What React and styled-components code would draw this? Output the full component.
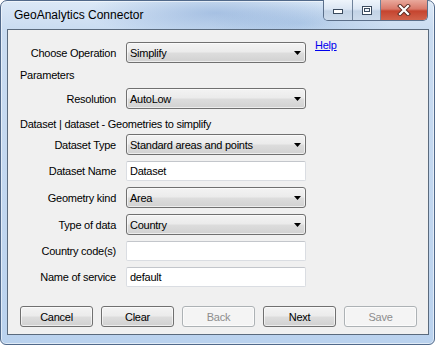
import React from "react";
import styled, { createGlobalStyle } from "styled-components";

const GlobalStyle = createGlobalStyle`
  html, body {
    margin: 0;
    padding: 0;
    background: #ffffff;
  }
  body {
    font-family: "Liberation Sans", Arial, sans-serif;
  }
`;

const Window = styled.div`
  box-sizing: border-box;
  width: 435px;
  height: 345px;
  display: flex;
  flex-direction: column;
  padding: 0 5px 9px 6px;
  border: 1px solid #51698a;
  border-radius: 7px 7px 6px 6px;
  background:
    radial-gradient(ellipse 130px 26px at 215px 12px, rgba(110, 150, 205, 0.45), transparent),
    radial-gradient(ellipse 90px 20px at 300px 22px, rgba(130, 170, 215, 0.35), transparent),
    linear-gradient(to bottom, #dce9f7 0px, #cadcf1 28px, #bad2ee 100%);
  box-shadow: inset 0 0 0 1px rgba(255, 255, 255, 0.55);
`;

const TitleBar = styled.div`
  height: 28px;
  display: flex;
  align-items: flex-start;
  padding-left: 7px;
`;

const Title = styled.span`
  align-self: center;
  margin-top: -1px;
  font-size: 12px;
  color: #000;
`;

const Captions = styled.div`
  margin-left: auto;
  margin-right: 1px;
  margin-top: -1px;
  display: flex;
  height: 20px;
  border: 1px solid #5b6f8a;
  border-top: none;
  border-radius: 0 0 5px 5px;
  overflow: hidden;
`;

const CaptionButton = styled.div`
  width: ${(p) => p.w}px;
  display: flex;
  align-items: center;
  justify-content: center;
  border-left: ${(p) => (p.first ? "none" : "1px solid #6f829a")};
  background: ${(p) =>
    p.close
      ? "linear-gradient(to bottom, #e9a99c 0%, #d9796a 45%, #c5442f 55%, #d1634b 100%)"
      : "linear-gradient(to bottom, #eef4fb 0%, #dbe6f3 45%, #c3d3e6 55%, #cddbeb 100%)"};
`;

const Client = styled.div`
  flex: 1;
  display: flex;
  flex-direction: column;
  background: #f0f0f0;
  border: 1px solid #5a6a7d;
  padding: 12px 0 7px 12px;
`;

const Row = styled.div`
  display: flex;
  align-items: center;
  gap: 10px;
  margin-top: ${(p) => p.top || 0}px;
`;

const Label = styled.span`
  width: 96px;
  text-align: right;
  font-size: 11px;
  letter-spacing: -0.25px;
  color: #000;
  white-space: nowrap;
`;

const Section = styled.div`
  height: 14px;
  line-height: 14px;
  font-size: 11px;
  letter-spacing: -0.25px;
  color: #000;
  margin-top: ${(p) => p.top}px;
`;

const Combo = styled.div`
  box-sizing: border-box;
  width: 180px;
  height: 21px;
  display: flex;
  align-items: center;
  justify-content: space-between;
  padding: 0 4px 0 3px;
  border: 1px solid #707070;
  border-radius: 3px;
  background: linear-gradient(to bottom, #f3f3f3 0%, #ebebeb 48%, #dddddd 52%, #d1d1d1 100%);
  box-shadow: inset 0 0 0 1px rgba(255, 255, 255, 0.6);
  font-size: 11px;
  letter-spacing: -0.25px;
  color: #000;
`;

const TextBox = styled.div`
  box-sizing: border-box;
  width: 180px;
  height: 20px;
  display: flex;
  align-items: center;
  padding: 0 3px;
  background: #ffffff;
  border: 1px solid #dadde2;
  border-top-color: #c3c6cb;
  border-radius: 2px;
  font-size: 11px;
  letter-spacing: -0.25px;
  color: #000;
`;

const HelpLink = styled.a`
  align-self: flex-start;
  margin-top: -3px;
  margin-left: -1px;
  font-size: 11px;
  letter-spacing: -0.25px;
  color: #0000ee;
  text-decoration: underline;
`;

const ButtonBar = styled.div`
  margin-top: auto;
  display: flex;
  gap: 8px;
`;

const Button = styled.div`
  box-sizing: border-box;
  width: 73px;
  height: 21px;
  display: flex;
  align-items: center;
  justify-content: center;
  border-radius: 3px;
  font-size: 11px;
  letter-spacing: -0.25px;
  border: 1px solid ${(p) => (p.disabled ? "#adb2b5" : "#707070")};
  color: ${(p) => (p.disabled ? "#8d8d8d" : "#000")};
  background: ${(p) =>
    p.disabled
      ? "#f4f4f4"
      : "linear-gradient(to bottom, #f3f3f3 0%, #ebebeb 48%, #dddddd 52%, #d1d1d1 100%)"};
  box-shadow: inset 0 0 0 1px rgba(255, 255, 255, 0.6);
`;

const Arrow = () => (
  <svg width="7" height="4" viewBox="0 0 7 4">
    <path d="M0 0 H7 L3.5 4 Z" fill="#000" />
  </svg>
);

const Select = ({ value }) => (
  <Combo>
    <span>{value}</span>
    <Arrow />
  </Combo>
);

const MinIcon = () => (
  <svg width="12" height="10" viewBox="0 0 12 10">
    <rect x="1.5" y="4.5" width="9" height="4" fill="#fff" stroke="#3a4a5e" />
  </svg>
);

const MaxIcon = () => (
  <svg width="12" height="11" viewBox="0 0 12 11">
    <rect x="1.5" y="1.5" width="9" height="8" fill="#fff" stroke="#3a4a5e" />
    <rect x="3.5" y="3.5" width="5" height="3" fill="#eef3f9" stroke="#3a4a5e" />
  </svg>
);

const CloseIcon = () => (
  <svg width="14" height="12" viewBox="0 0 14 12">
    <path d="M3 2 L11 10 M11 2 L3 10" stroke="#5a2a22" strokeWidth="4" strokeLinecap="square" />
    <path d="M3 2 L11 10 M11 2 L3 10" stroke="#ffffff" strokeWidth="2.2" strokeLinecap="square" />
  </svg>
);

export default function App() {
  return (
    <>
      <GlobalStyle />
      <Window>
        <TitleBar>
          <Title>GeoAnalytics Connector</Title>
          <Captions>
            <CaptionButton w={28} first>
              <MinIcon />
            </CaptionButton>
            <CaptionButton w={27}>
              <MaxIcon />
            </CaptionButton>
            <CaptionButton w={46} close>
              <CloseIcon />
            </CaptionButton>
          </Captions>
        </TitleBar>
        <Client>
          <Row>
            <Label>Choose Operation</Label>
            <Select value="Simplify" />
            <HelpLink href="#help">Help</HelpLink>
          </Row>
          <Section top={5}>Parameters</Section>
          <Row top={6}>
            <Label>Resolution</Label>
            <Select value="AutoLow" />
          </Row>
          <Section top={8}>Dataset | dataset - Geometries to simplify</Section>
          <Row top={3}>
            <Label>Dataset Type</Label>
            <Select value="Standard areas and points" />
          </Row>
          <Row top={6}>
            <Label>Dataset Name</Label>
            <TextBox>Dataset</TextBox>
          </Row>
          <Row top={6}>
            <Label>Geometry kind</Label>
            <Select value="Area" />
          </Row>
          <Row top={6}>
            <Label>Type of data</Label>
            <Select value="Country" />
          </Row>
          <Row top={6}>
            <Label>Country code(s)</Label>
            <TextBox />
          </Row>
          <Row top={6}>
            <Label>Name of service</Label>
            <TextBox>default</TextBox>
          </Row>
          <ButtonBar>
            <Button>Cancel</Button>
            <Button>Clear</Button>
            <Button disabled>Back</Button>
            <Button>Next</Button>
            <Button disabled>Save</Button>
          </ButtonBar>
        </Client>
      </Window>
    </>
  );
}
